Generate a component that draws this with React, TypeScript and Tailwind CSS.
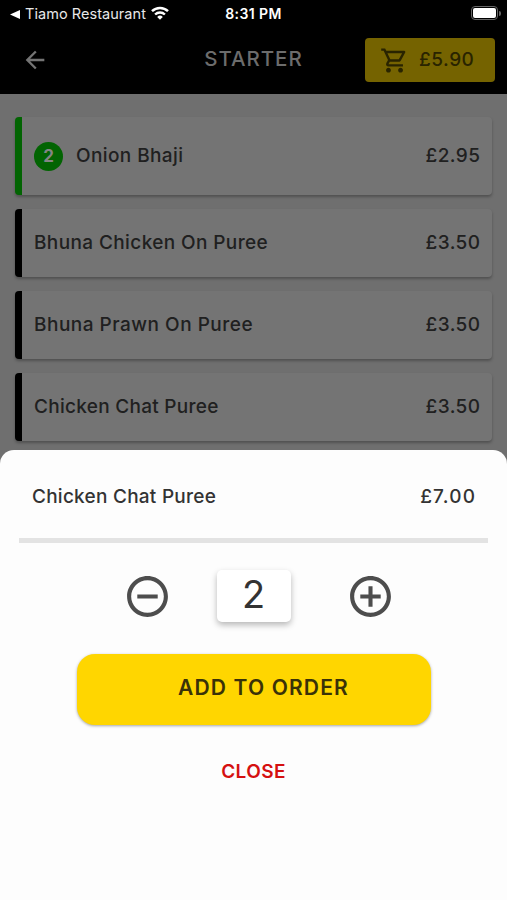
import { MdAddCircleOutline, MdArrowBack, MdOutlineShoppingCart, MdRemoveCircleOutline } from "react-icons/md";

type Item = { name: string; price: string; count?: number; spacing: string };

const items: Item[] = [
  { name: "Onion Bhaji", price: "£2.95", count: 2, spacing: "tracking-[0.4px]" },
  { name: "Bhuna Chicken On Puree", price: "£3.50", spacing: "tracking-[0.39px]" },
  { name: "Bhuna Prawn On Puree", price: "£3.50", spacing: "tracking-[0.5px]" },
  { name: "Chicken Chat Puree", price: "£3.50", spacing: "tracking-[0.28px]" },
];

function StatusBar() {
  return (
    <div className="grid h-7 grid-cols-3 items-center px-[10px] text-[14.5px] leading-none text-white">
      <div className="flex items-center whitespace-nowrap">
        <svg className="h-[9px] w-[10px] shrink-0" viewBox="0 0 10 9" fill="currentColor">
          <path d="M0 4.5 10 0v9z" />
        </svg>
        <span className="ml-[5px] font-normal text-[#e8e8e8] tracking-[0.05px]">Tiamo Restaurant</span>
        <svg className="ml-[5px] -mt-[2px] h-[14px] w-[18px] shrink-0" viewBox="0 0 18 14" fill="none" stroke="currentColor">
          <path d="M1 5.2a11.4 11.4 0 0 1 16 0" strokeWidth="2.5" />
          <path d="M4.1 8.5a7 7 0 0 1 9.8 0" strokeWidth="2.4" />
          <path d="M9 13.8 6.2 10.9a4 4 0 0 1 5.6 0z" fill="currentColor" stroke="none" />
        </svg>
      </div>
      <span className="text-center text-[14px] font-semibold tracking-[0.4px]">8:31 PM</span>
      <div className="-mt-[2px] -mr-[4px] flex items-center justify-end">
        <div className="h-[14px] w-[27px] rounded-[4px] border border-[#666] p-px">
          <div className="h-full rounded-[2px] bg-white" />
        </div>
        <div className="ml-px h-[5px] w-[2px] rounded-r-full bg-[#666]" />
      </div>
    </div>
  );
}

function ItemCard({ item }: { item: Item }) {
  const picked = item.count !== undefined;
  return (
    <div
      className={`flex items-center justify-between rounded-[4px] border-l-[7px] bg-[#747474] pr-[12px] pl-[12px] shadow-[0_2px_3px_rgba(0,0,0,0.28)] ${
        picked ? "h-[78px] border-[#026402]" : "h-[68px] border-black"
      }`}
    >
      <div className="flex items-center">
        {picked && (
          <span className="mr-[13px] flex size-[29px] items-center justify-center rounded-full bg-[#026402] text-[17px] font-bold text-[#848484]">
            {item.count}
          </span>
        )}
        <span className={`pb-px ${item.spacing}`}>{item.name}</span>
      </div>
      <span className="-mr-[0.4px] pb-px tracking-[0.4px]">{item.price}</span>
    </div>
  );
}

export default function App() {
  return (
    <div className="flex h-[900px] w-[507px] flex-col overflow-hidden bg-[#6f6f6f] font-['Inter','Liberation_Sans',sans-serif] text-[19px] leading-none font-medium text-[#202020]">
      <header className="h-[94px] shrink-0 bg-black">
        <StatusBar />
        <div className="grid h-[64px] grid-cols-[1fr_auto_1fr] items-center pr-[12px] pl-[21px]">
          <MdArrowBack className="size-7 text-[#747474]" />
          <h1 className="-ml-[9px] pb-[2px] text-[20.5px] tracking-[0.95px] text-[#6c6c6c]">STARTER</h1>
          <div className="flex h-[44px] w-[130px] items-center justify-self-end rounded-[4px] bg-[#756300] pl-[15px] text-[#292400]">
            <MdOutlineShoppingCart className="size-[29px]" />
            <span className="ml-[10px] pb-[2px] tracking-[0.5px]">£5.90</span>
          </div>
        </div>
      </header>

      <main className="flex h-[356px] shrink-0 flex-col gap-[14px] pt-[23px] pr-[15px] pl-[15px]">
        {items.map((item) => (
          <ItemCard key={item.name} item={item} />
        ))}
      </main>

      <section className="flex grow flex-col rounded-t-[14px] bg-[#fdfdfd] px-[19px] text-[#333]">
        <div className="flex h-[88px] items-center justify-between px-[13px] pt-[4px]">
          <span className="tracking-[0.25px]">Chicken Chat Puree</span>
          <span className="-mr-[1.2px] tracking-[1.2px]">£7.00</span>
        </div>
        <div className="h-[5px] bg-[#e3e3e3]" />
        <div className="mt-[26px] ml-[10px] flex h-[54px] items-center justify-center">
          <MdRemoveCircleOutline className="size-[49px] text-[#4d4d4d]" />
          <div className="mr-[55px] ml-[45px] flex h-[52px] w-[74px] items-center justify-center rounded-[5px] bg-white pb-[5px] text-[38px] font-normal shadow-[0_3px_6px_rgba(0,0,0,0.28)]">
            2
          </div>
          <MdAddCircleOutline className="size-[49px] text-[#4d4d4d]" />
        </div>
        <button className="mt-[31px] ml-[58px] flex h-[71px] w-[354px] items-center justify-center rounded-[18px] bg-[#ffd600] pb-[4px] pl-[19px] text-[21px] font-semibold tracking-[1.15px] text-[#3a3208] shadow-[0_1px_3px_rgba(0,0,0,0.35)]">
          ADD TO ORDER
        </button>
        <button className="mt-[37px] self-center text-[19px] font-semibold tracking-[0.4px] text-[#d51010]">CLOSE</button>
      </section>
    </div>
  );
}
